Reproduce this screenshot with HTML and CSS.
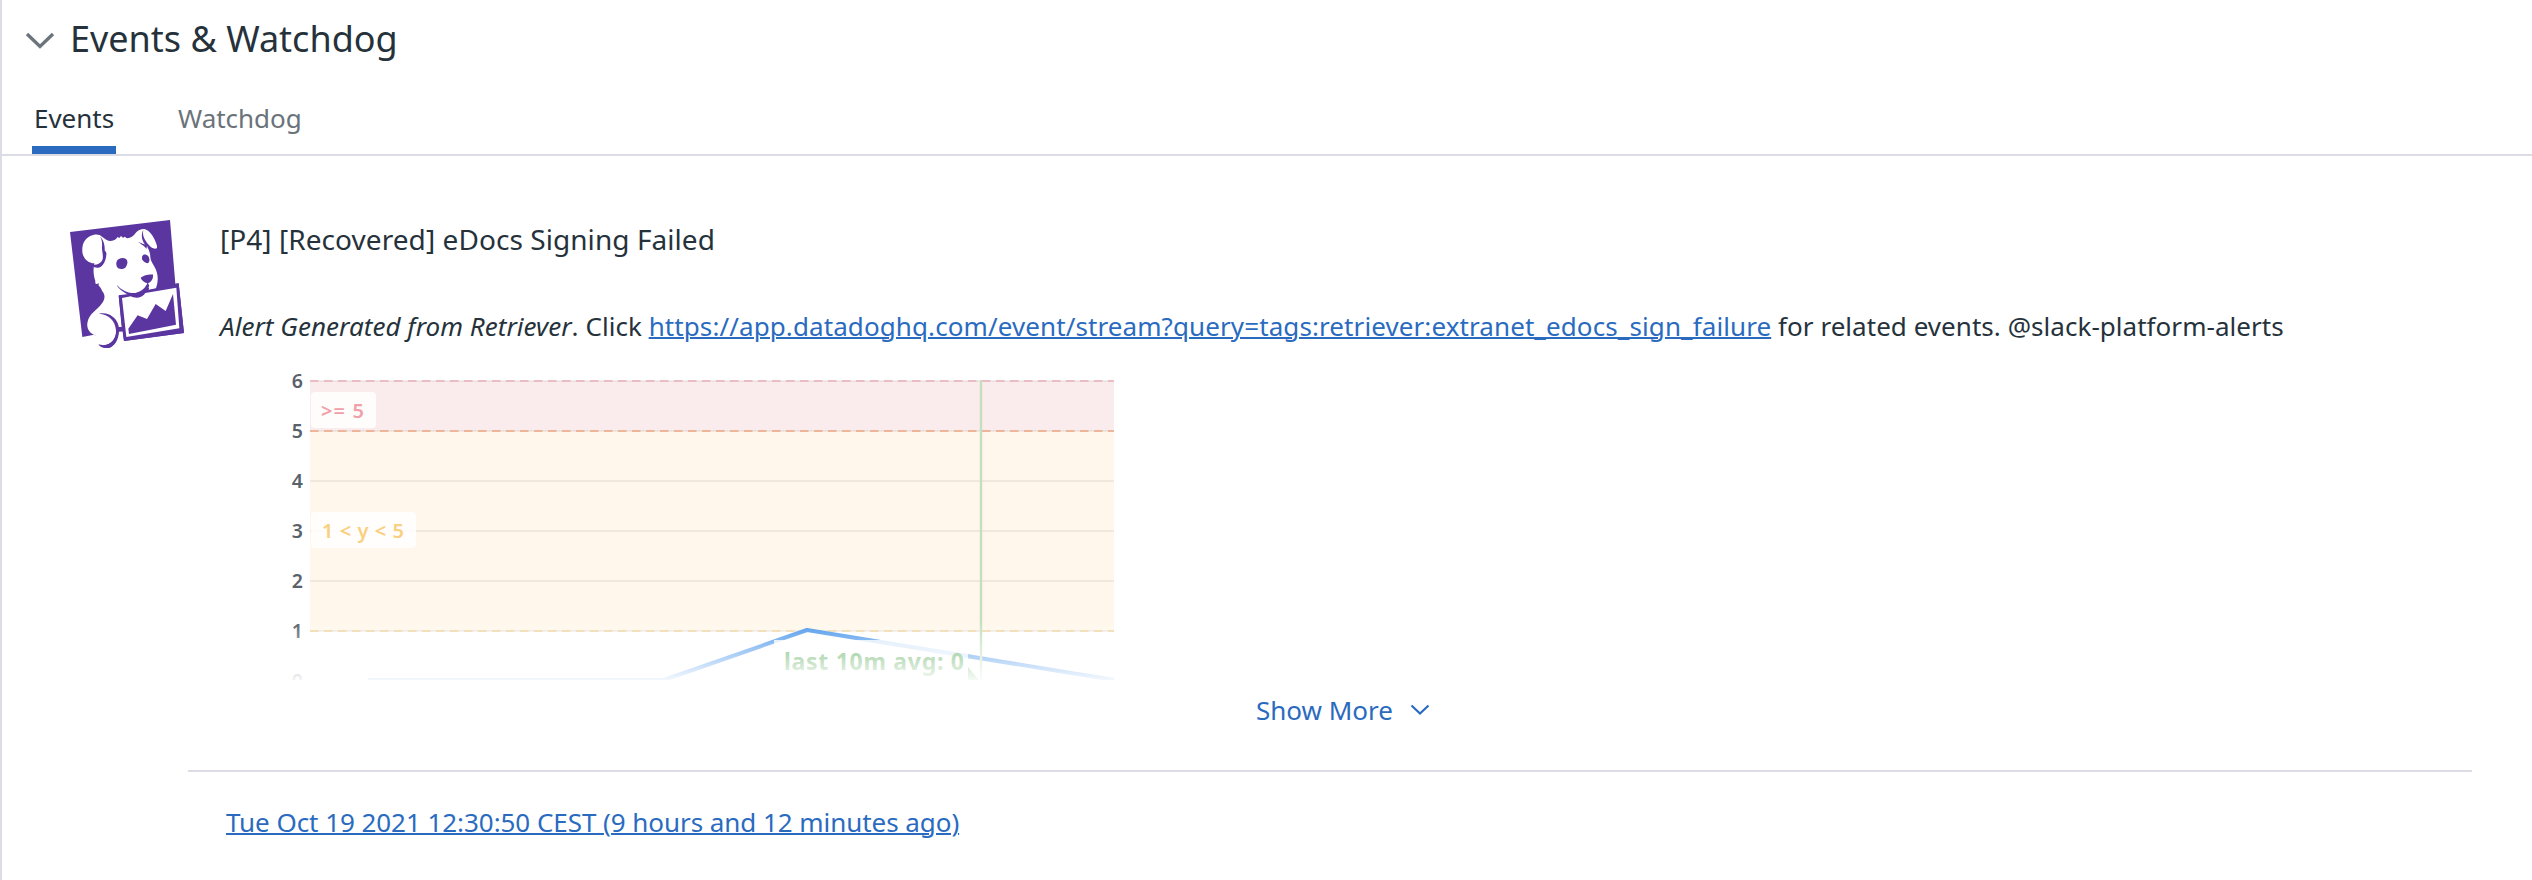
FILE: index.html
```html
<!DOCTYPE html>
<html lang="en">
<head>
<meta charset="utf-8">
<title>Events &amp; Watchdog</title>
<link rel="stylesheet" href="styles.css">
</head>
<body>
<section class="panel">
  <header class="panel-header">
    <svg class="panel-chevron" width="30" height="18" viewBox="0 0 30 18"><path d="M2 2 15 14.500 28 2"/></svg>
    <h1 class="panel-title">Events &amp; Watchdog</h1>
  </header>
  <nav class="tabs">
    <a class="tab tab-active">Events</a>
    <a class="tab">Watchdog</a>
  </nav>
  <article class="event">
    <svg class="event-logo" width="150" height="160" viewBox="0 0 450 480">
      <path class="ink" d="M60 96 360 60 376 251 386 250 402 399 222 423 218 394 206 394C203 420 193 438 178 443 165 446 154 443 146 435 159 439 170 436 177 430L132 404 97 411Z"/>
      <path class="paper" d="M97 155C95 130 107 110 130 105 140 102 150 104 156 110L170 120C178 124 188 124 197 118L203 111 208 114 213 108 219 113 225 110 229 114C238 116 248 110 254 103 260 92 271 87 283 87 298 90 314 112 321 138 322 147 318 149 311 146 304 144 297 142 290 138 297 148 301 160 301 172 302 184 309 192 315 203 323 217 326 239 320 258L317 268 296 270C298 264 297 262 293 261 286 279 275 289 258 290 248 287 230 284 216 285L206 287 215 381 203 382C201 366 190 350 174 342 191 355 201 374 199 394 198 414 187 428 175 432 160 434 147 424 135 406 119 400 110 386 112 370 116 340 142 331 156 310 166 295 166 284 156 272 151 257 144 262 146 249 138 255 135 251 136 243 130 225 129 210 133 190 113 190 98 173 97 155Z"/>
      <path class="ink" d="M150 110C161 119 165 136 164 151L169 158C170 178 160 201 145 203 132 204 122 199 116 190 133 197 146 195 155 184 163 172 155 154 156 141 157 128 156 119 150 110Z"/>
      <path class="ink" d="M280 90C276 108 285 122 296 134 304 143 313 149 321 145 316 152 307 151 299 145L291 138 289 147C284 136 271 132 264 125 274 129 280 131 285 134 274 119 273 102 280 90Z"/>
      <path class="ink" d="M201 182C207 173 221 172 228 177 235 183 233 194 226 203 218 209 205 208 201 201 198 194 198 188 201 182ZM276 170C280 161 289 162 295 169 300 176 299 185 295 189 289 191 280 185 276 178ZM272 234C280 225 299 224 308 223 312 233 304 246 294 250 284 249 276 242 272 234Z"/>
      <path class="ink" d="M200 254C214 270 234 281 256 279 275 275 286 265 293 247L298 258C293 264 294 267 290 275 284 289 266 296 250 293L239 286C225 278 207 270 200 254Z"/>
      <path class="ink" d="M206 286 242 281 258 291 283 272 386 250 402 399 222 423 218 394 204 395 204 382 216 381Z"/>
      <path class="paper" d="M216 294 243 289C256 297 278 294 286 279L379 263 388 385 229 411Z"/>
      <path class="ink" d="M235 386 263 346 291 357 317 312 347 333 369 282 378 374 237 402Z"/>
      <path class="ink" d="M147 341C178 334 206 357 207 386 208 417 194 441 174 444 163 445 153 442 145 433 177 443 200 421 198 391 196 362 176 343 147 341Z"/>
    </svg>
    <div class="event-main">
      <div class="event-content">
        <h2 class="event-title">[P4] [Recovered] eDocs Signing Failed</h2>
        <p class="event-message"><em>Alert Generated from Retriever</em>. Click <a class="link">https://app.datadoghq.com/event/stream?query=tags:retriever:extranet_edocs_sign_failure</a> for related events. @slack-platform-alerts</p>
        <svg class="chart" width="900" height="310" viewBox="220 370 900 310">
          <defs>
            <linearGradient id="fade" x1="0" y1="0" x2="0" y2="1"><stop offset="0" stop-color="#fff" stop-opacity="0"/><stop offset="1" stop-color="#fff" stop-opacity=".93"/></linearGradient>
          </defs>
          <rect class="zone-alert" x="310" y="381" width="804" height="50"/>
          <rect class="zone-warn" x="310" y="431" width="804" height="200"/>
          <path class="grid" d="M310 381H1114M310 431H1114M310 481H1114M310 531H1114M310 581H1114M310 631H1114"/>
          <path class="limit limit-top" d="M310 381H1114"/>
          <path class="limit limit-alert" d="M310 431H1114"/>
          <path class="limit limit-warn" d="M310 631H1114"/>
          <path class="series" d="M368 680H664L807 630 1114 680"/>
          <rect class="tag" x="311" y="392" width="65" height="36" rx="4"/>
          <rect class="tag" x="311" y="512" width="105" height="36" rx="4"/>
          <text class="tag-text tag-alert" x="321" y="418" textLength="43">&gt;= 5</text>
          <text class="tag-text tag-warn" x="322" y="538" textLength="82">1 &lt; y &lt; 5</text>
          <path class="marker" d="M981 380V680"/>
          <path class="callout" d="M774 640H968V667L981 680H774Z"/>
          <path class="callout-tip" d="M968 667 979 680H968Z"/>
          <text class="callout-text" x="784" y="670" textLength="180">last 10m avg: 0</text>
          <g class="axis">
            <text x="303" y="388">6</text>
            <text x="303" y="438">5</text>
            <text x="303" y="488">4</text>
            <text x="303" y="538">3</text>
            <text x="303" y="588">2</text>
            <text x="303" y="638">1</text>
            <text x="303" y="688">0</text>
          </g>
          <rect x="220" y="620" width="900" height="60" fill="url(#fade)"/>
        </svg>
        <div class="show-more">
          <span>Show More</span>
          <svg class="show-chevron" width="20" height="12" viewBox="0 0 20 12"><path d="M1.500 1.500 10 9.500 18.500 1.500"/></svg>
        </div>
      </div>
      <footer class="event-footer"><a class="link">Tue Oct 19 2021 12:30:50 CEST (9 hours and 12 minutes ago)</a></footer>
    </div>
  </article>
</section>
</body>
</html>
```
FILE: styles.css
```css
* { box-sizing: border-box; }
body {
  margin: 0;
  background: #fff;
  color: #26323b;
  font: 26px/36px "Noto Sans", sans-serif;
}
.panel { height: 880px; border-left: 2px solid #dcdce4; overflow: hidden; }
.panel-header { display: flex; align-items: flex-start; gap: 15px; height: 62px; padding: 15px 0 0 23px; }
.panel-chevron { margin-top: 17px; fill: none; stroke: #6c757c; stroke-width: 3.4; }
.panel-title { margin: 0; font-size: 36px; font-weight: 400; line-height: 48px; }
.tabs { display: flex; gap: 60px; height: 94px; padding: 38px 0 0 30px; border-bottom: 2px solid #dcdce4; }
.tab { height: 54px; padding: 0 2px; color: #6a7379; border-bottom: 8px solid transparent; letter-spacing: -.03px; }
.tab-active { width: 84px; color: #26323b; border-bottom-color: #2a6bbf; }
.event { display: flex; padding: 44px 60px 0 48px; }
.event-logo { flex: none; width: 150px; height: 160px; margin-right: -12px; }
.ink { fill: #5b35a0; }
.paper { fill: #fff; }
.event-main { flex: 1; }
.event-content { height: 572px; padding: 20px 6px 0 32px; border-bottom: 2px solid #dcdce4; }
.event-title { margin: 0 0 50px; font-size: 28px; font-weight: 400; line-height: 38px; letter-spacing: .065px; }
.event-message { margin: 0; white-space: nowrap; letter-spacing: .04px; }
.event-message .link { letter-spacing: .095px; }
.link { color: #2a6bbf; text-decoration: underline; text-decoration-thickness: 2px; }
.chart { display: block; margin-top: 26px; font-family: "Noto Sans", sans-serif; }
.zone-alert { fill: #faecec; }
.zone-warn { fill: #fff7eb; }
.grid { fill: none; stroke: #6b6560; stroke-opacity: .1; stroke-width: 2; }
.limit { fill: none; stroke-width: 2; stroke-dasharray: 8.500 5.500; }
.limit-top { stroke: #e9bdc1; }
.limit-alert { stroke: #edb69b; }
.limit-warn { stroke: #f1d9ad; }
.series { fill: none; stroke: #4d98eb; stroke-width: 4; stroke-linejoin: bevel; }
.tag { fill: #fff; fill-opacity: .85; }
.tag-text { font-size: 20px; font-weight: 600; }
.tag-alert { fill: #f0a0a9; }
.tag-warn { fill: #f9d080; }
.marker { fill: none; stroke: #c3dfbd; stroke-width: 2.4; }
.callout { fill: #fff; fill-opacity: .8; }
.callout-tip { fill: #74b974; }
.callout-text { fill: #5fae5e; font-size: 23px; font-weight: 700; }
.axis { fill: #59626a; font-size: 19.5px; font-weight: 600; text-anchor: end; }
.show-more { display: flex; justify-content: center; align-items: center; gap: 17px; margin-top: 12px; color: #2a6bbf; }
.show-chevron { fill: none; stroke: #2a6bbf; stroke-width: 2.2; }
.event-footer { padding: 32px 0 0 38px; letter-spacing: -.055px; }
```
